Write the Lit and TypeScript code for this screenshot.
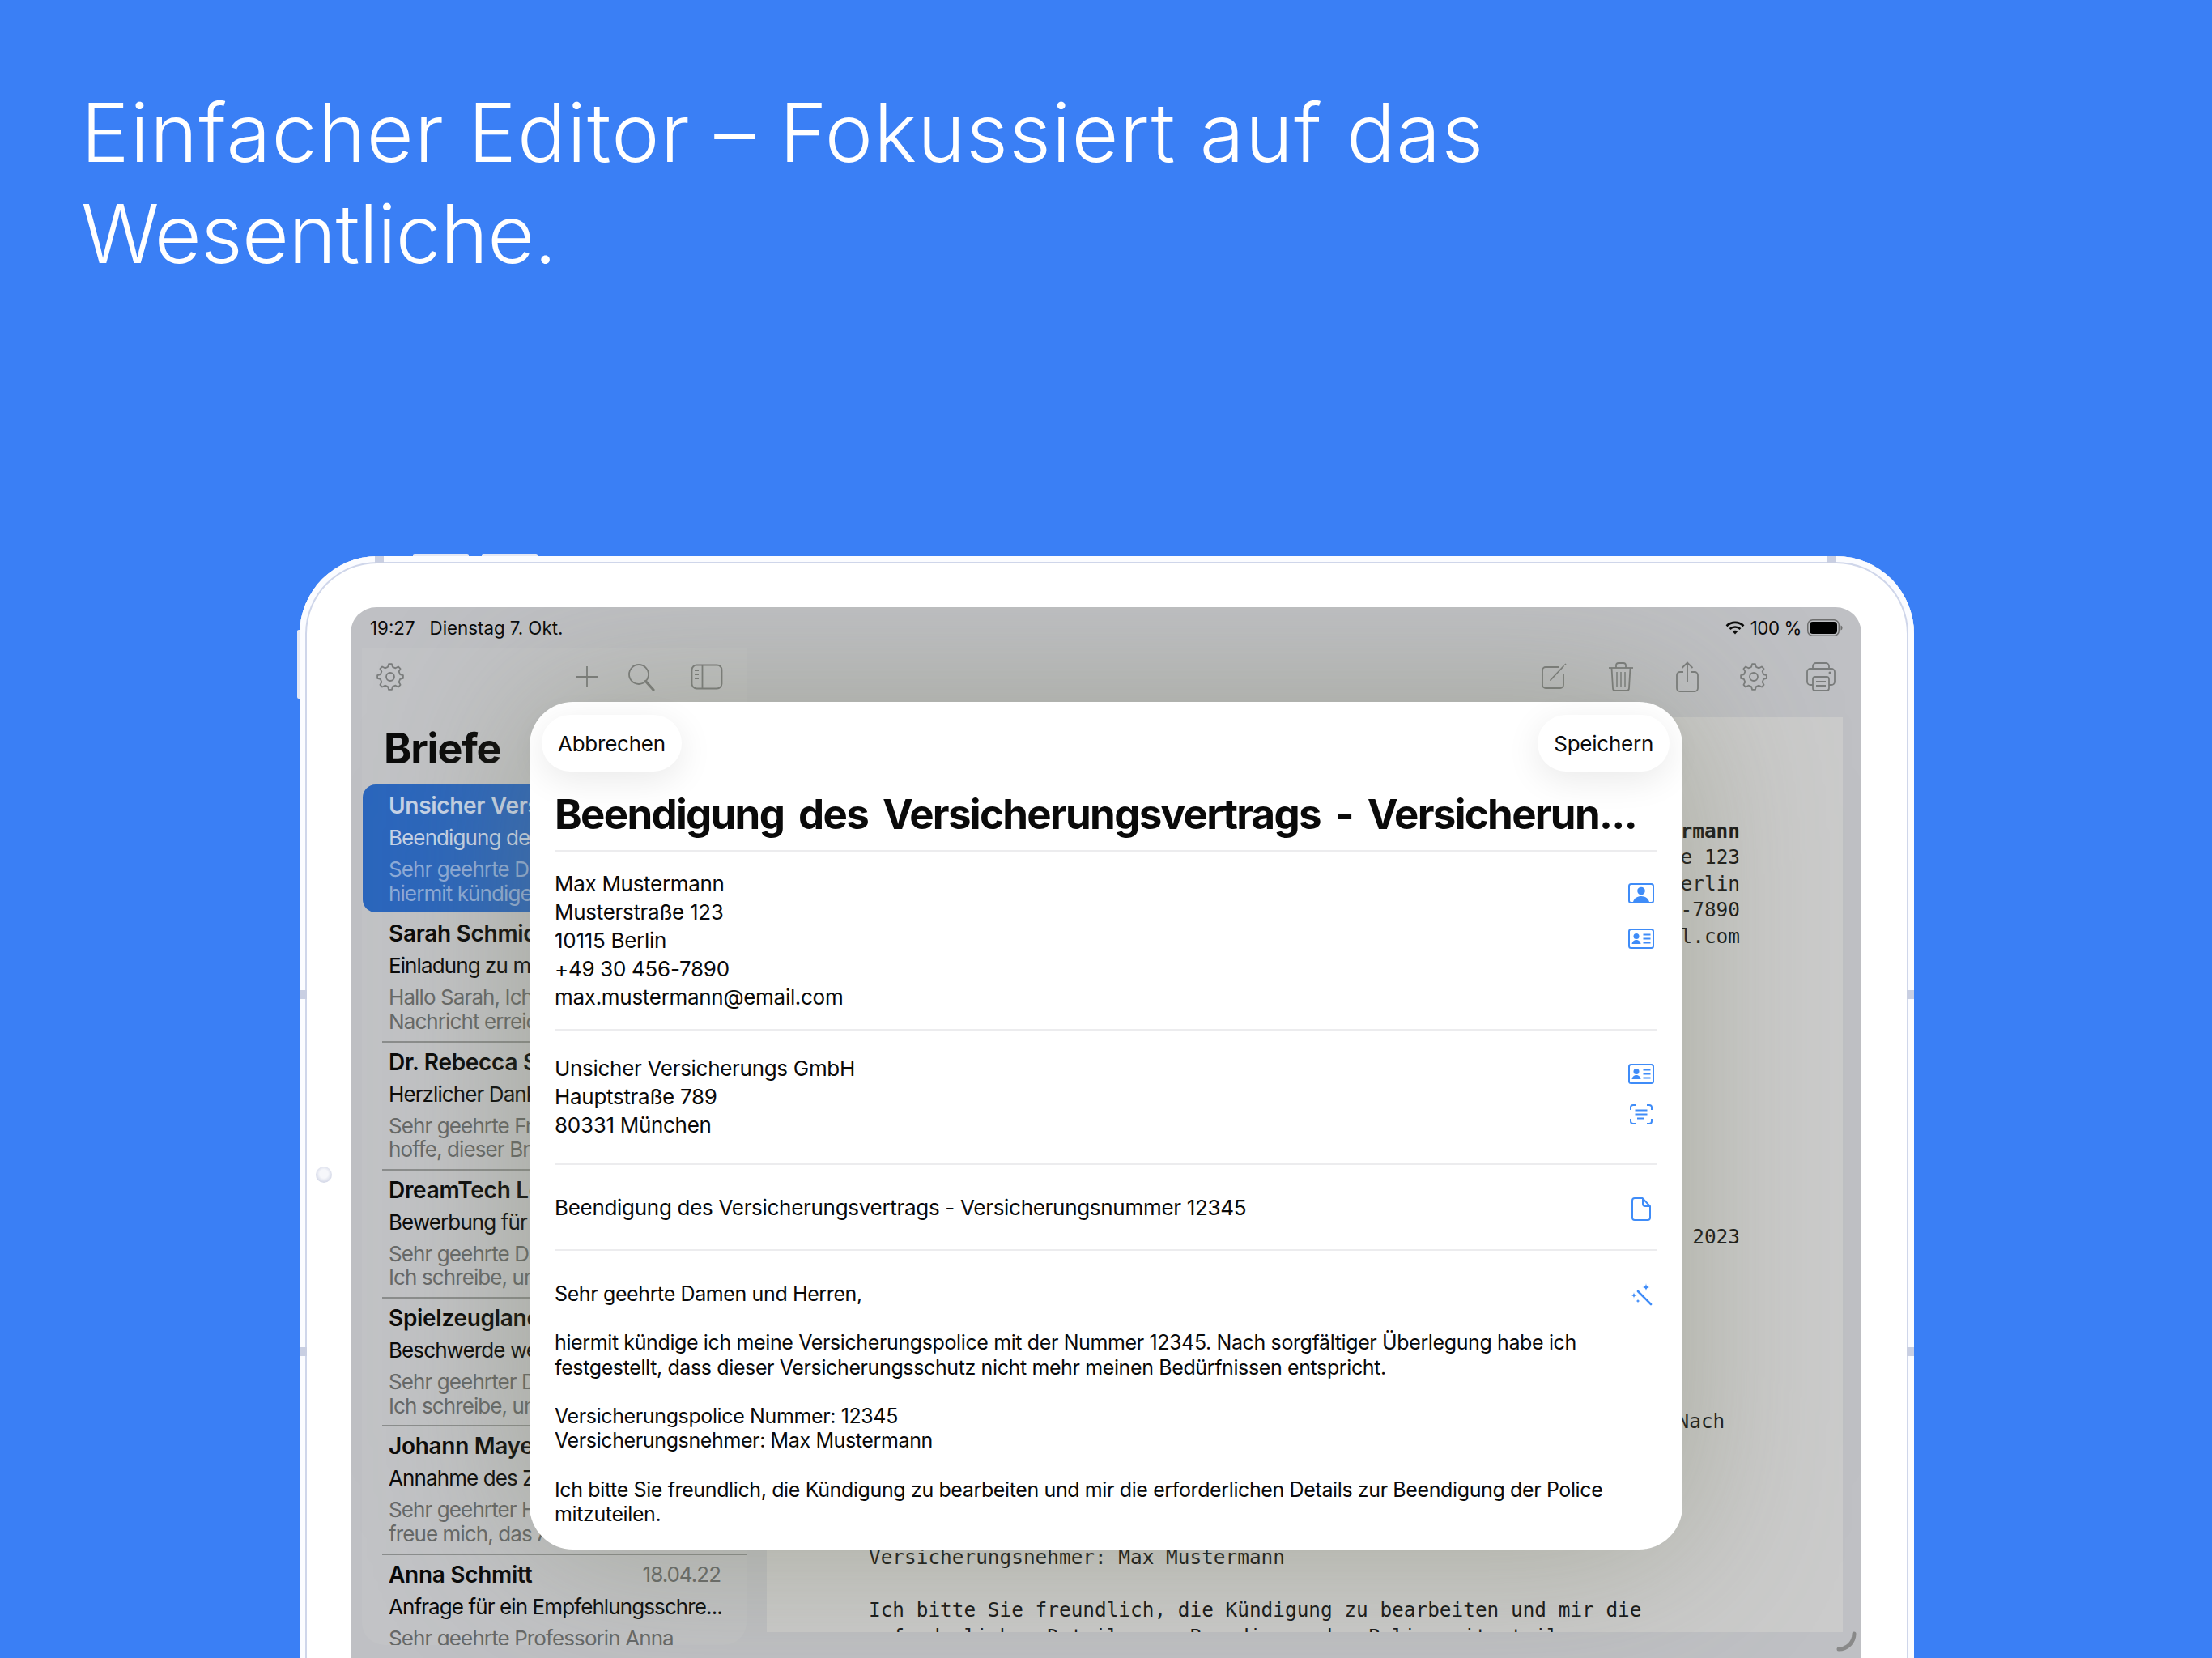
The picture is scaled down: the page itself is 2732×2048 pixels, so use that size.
import { LitElement, html, css } from 'lit';
import { customElement } from 'lit/decorators.js';
import { classMap } from 'lit/directives/class-map.js';

interface Letter {
  name: string;
  subject: string;
  preview: string[];
  date?: string;
  selected?: boolean;
}

const LETTERS: Letter[] = [
  {
    name: 'Unsicher Versicherungs GmbH',
    subject: 'Beendigung des Versicherungsvertrags',
    preview: ['Sehr geehrte Damen und Herren,', 'hiermit kündige ich meine Police'],
    selected: true,
  },
  {
    name: 'Sarah Schmidt',
    subject: 'Einladung zu meiner Feier',
    preview: ['Hallo Sarah,  Ich hoffe, diese', 'Nachricht erreicht dich gut.'],
  },
  {
    name: 'Dr. Rebecca Schneider',
    subject: 'Herzlicher Dank für Ihre Hilfe',
    preview: ['Sehr geehrte Frau Dr. Schneider, ich', 'hoffe, dieser Brief erreicht Sie gut.'],
  },
  {
    name: 'DreamTech Lösungen',
    subject: 'Bewerbung für die Stelle',
    preview: ['Sehr geehrte Damen und Herren,', 'Ich schreibe, um mich zu bewerben.'],
  },
  {
    name: 'Spielzeugland GmbH',
    subject: 'Beschwerde wegen Lieferung',
    preview: ['Sehr geehrter Damen und Herren,', 'Ich schreibe, um mich zu beschweren.'],
  },
  {
    name: 'Johann Mayer',
    subject: 'Annahme des Zimmers',
    preview: ['Sehr geehrter Herr Mayer, ich', 'freue mich, das Angebot anzunehmen.'],
  },
  {
    name: 'Anna Schmitt',
    subject: 'Anfrage für ein Empfehlungsschre...',
    preview: ['Sehr geehrte Professorin Anna'],
    date: '18.04.22',
  },
];

const BODY = `Sehr geehrte Damen und Herren,

hiermit kündige ich meine Versicherungspolice mit der Nummer 12345. Nach sorgfältiger Überlegung habe ich festgestellt, dass dieser Versicherungsschutz nicht mehr meinen Bedürfnissen entspricht.

Versicherungspolice Nummer: 12345
Versicherungsnehmer: Max Mustermann

Ich bitte Sie freundlich, die Kündigung zu bearbeiten und mir die erforderlichen Details zur Beendigung der Police mitzuteilen.`;

// gear outline, used twice in the toolbars
function gearPath(cx: number, cy: number, inner: number, outer: number, teeth: number) {
  const step = (Math.PI * 2) / teeth;
  const pts: string[] = [];
  for (let i = 0; i < teeth; i++) {
    const a = i * step;
    [
      [inner, -0.3],
      [outer, -0.15],
      [outer, 0.15],
      [inner, 0.3],
    ].forEach(([r, o]) => {
      const t = a + o * step;
      pts.push(`${(cx + r * Math.cos(t)).toFixed(2)} ${(cy + r * Math.sin(t)).toFixed(2)}`);
    });
  }
  return `M${pts.join('L')}Z`;
}

function star(x: number, y: number, r: number) {
  return `M${x} ${y - r}Q${x} ${y} ${x + r} ${y}Q${x} ${y} ${x} ${y + r}Q${x} ${y} ${x - r} ${y}Q${x} ${y} ${x} ${y - r}Z`;
}

const gearIcon = html`<svg class="tool" width="34" height="34" viewBox="0 0 34 34">
  <path d=${gearPath(17, 17, 12.5, 16, 8)} stroke-linejoin="round"></path>
  <circle cx="17" cy="17" r="5"></circle>
</svg>`;

const personCrop = html`<svg width="32" height="25" viewBox="0 0 32 25" fill="none">
  <rect x="1" y="1" width="30" height="23" rx="2.5" stroke="#3f8cf8" stroke-width="2"></rect>
  <circle cx="16" cy="9.5" r="4.8" fill="#3f8cf8"></circle>
  <path d="M6 23c1.5-5 5.500-7 10-7s8.500 2 10 7z" fill="#3f8cf8"></path>
</svg>`;

const personText = html`<svg width="32" height="25" viewBox="0 0 32 25" fill="none">
  <rect x="1" y="1" width="30" height="23" rx="2.5" stroke="#3f8cf8" stroke-width="2"></rect>
  <circle cx="10" cy="9.500" r="3.500" fill="#3f8cf8"></circle>
  <path d="M4.500 19c.5-3.500 3-5 5.500-5s5 1.500 5.500 5z" fill="#3f8cf8"></path>
  <path d="M18.500 7.500h9M18.500 12.500h9M18.500 17.500h9" stroke="#3f8cf8" stroke-width="1.800"></path>
</svg>`;

@customElement('app-root')
export class AppRoot extends LitElement {
  static styles = css`
    :host {
      display: block;
      width: 2732px;
      height: 2048px;
      overflow: hidden;
      background: #3a7ff5;
      font-family: Inter, 'Liberation Sans', sans-serif;
      color: #0a0a0a;
    }

    .headline {
      margin: 0;
      padding: 101px 0 0 100px;
      font-size: 100px;
      line-height: 125px;
      font-weight: 300;
      color: #fff;
    }
    .line-a {
      letter-spacing: 1.200px;
    }
    .line-b {
      letter-spacing: -0.700px;
    }

    .device {
      position: relative;
      width: 1994px;
      height: 1500px;
      box-sizing: border-box;
      margin: 336px 0 0 370px;
      padding: 63px 65px 0 63px;
      background: #fff;
      border-radius: 96px 96px 0 0;
      box-shadow: inset 0 0 0 7px #fbfcff, inset 0 0 0 9px #cfd6ea;
    }

    .hw {
      position: absolute;
      background: #e4e8f4;
    }
    .vol-a { left: 140px; top: -3px; width: 69px; height: 3px; border-radius: 2px 2px 0 0; }
    .vol-b { left: 225px; top: -3px; width: 69px; height: 3px; border-radius: 2px 2px 0 0; }
    .power { left: -3px; top: 91px; width: 3px; height: 85px; border-radius: 2px 0 0 2px; }
    .band { background: #c9cfe2; }
    .band-tl { left: 93px; top: 0; width: 11px; height: 9px; }
    .band-tr { left: 1887px; top: 0; width: 11px; height: 9px; }
    .band-l1 { left: 0; top: 536px; width: 9px; height: 11px; }
    .band-l2 { left: 0; top: 977px; width: 9px; height: 11px; }
    .band-r1 { right: 0; top: 536px; width: 9px; height: 11px; }
    .band-r2 { right: 0; top: 977px; width: 9px; height: 11px; }
    .camera {
      left: 20px;
      top: 754px;
      width: 20px;
      height: 20px;
      border-radius: 50%;
      background: radial-gradient(circle at 50% 45%, #f6f7fb 35%, #d5d9e8 70%, #eceef6 100%);
    }

    .screen {
      position: relative;
      height: 1298px;
      overflow: hidden;
      background: #bfc0c4;
      border-radius: 32px 32px 0 0;
    }

    .status {
      display: flex;
      align-items: center;
      height: 50px;
      box-sizing: border-box;
      padding: 0 23px 0 24px;
      font-size: 22.300px;
    }
    .status .date {
      margin-left: 18px;
    }
    .status .right {
      margin-left: auto;
      display: flex;
      align-items: center;
      gap: 7px;
      letter-spacing: -0.4px;
    }

    .panes {
      display: flex;
    }

    .sidebar {
      flex: none;
      width: 475px;
      height: 1232px;
      margin-left: 14px;
      overflow: hidden;
      border-radius: 0 0 28px 28px;
      background: #c2c3c6;
    }

    .toolbar {
      display: flex;
      align-items: center;
      height: 72px;
    }
    .tool {
      display: block;
      fill: none;
      stroke: #7b7d7d;
      stroke-width: 1.800;
    }
    .sidebar .toolbar {
      padding: 0 29px 0 18px;
    }
    .plus { margin-left: auto; }
    .search { margin-left: 37px; }
    .panel-toggle { margin-left: 44px; }

    .title {
      margin: 0;
      height: 97px;
      box-sizing: border-box;
      padding: 21px 0 0 27px;
      font-size: 52px;
      line-height: 63px;
      font-weight: 700;
      letter-spacing: -1.200px;
    }

    .row {
      height: 158.300px;
      box-sizing: border-box;
      padding: 8px 32px 0 32px;
      margin-left: 1px;
      white-space: nowrap;
      overflow: hidden;
    }
    .row + .row {
      position: relative;
    }
    .row + .row::before {
      content: '';
      position: absolute;
      left: 24px;
      right: 0;
      top: 0;
      height: 2px;
      background: #8b8d8d;
    }
    .row.selected + .row::before {
      display: none;
    }
    .row.selected {
      background: #2b66bd;
      border-radius: 16px;
    }
    .row-head {
      display: flex;
      justify-content: space-between;
      font-size: 28px;
      line-height: 36px;
      font-weight: 600;
      letter-spacing: -0.3px;
    }
    .row-date {
      font-size: 26px;
      font-weight: 400;
      letter-spacing: -1px;
      color: #676969;
    }
    .row-subject {
      margin-top: 4px;
      font-size: 26px;
      line-height: 36px;
      letter-spacing: -0.9px;
    }
    .row-preview {
      margin-top: 6px;
      font-size: 26px;
      line-height: 29.600px;
      letter-spacing: -0.9px;
      color: #666868;
    }
    .row.selected .row-head,
    .row.selected .row-subject {
      color: #c6d3e8;
    }
    .row.selected .row-preview {
      color: #8dabd9;
    }

    .main {
      flex: 1;
      min-width: 0;
    }
    .main .toolbar {
      justify-content: flex-end;
      padding-right: 9px;
    }
    .tool-slot {
      display: flex;
      justify-content: center;
      width: 82.400px;
    }

    .paper {
      box-sizing: border-box;
      width: 1329px;
      height: 1130px;
      margin: 14px 0 0 25px;
      padding: 125px 127px 0 126px;
      overflow: hidden;
      background: #cbcbcb;
      font-family: 'DejaVu Sans Mono', 'Liberation Mono', monospace;
      font-size: 24.400px;
      line-height: 32.400px;
      color: #161616;
    }
    .paper p {
      margin: 0;
    }
    .sender {
      text-align: right;
    }
    .sender b {
      font-weight: 700;
    }
    .recipient { margin-top: 65px !important; }
    .letter-date { margin-top: 177px !important; text-align: right; }
    .letter-subject { margin-top: 65px !important; }
    .salute { margin-top: 33px !important; }
    .para-a { margin-top: 33px !important; }
    .para-b { margin-top: 38px !important; }
    .para-c { margin-top: 31.500px !important; line-height: 33px; }

    .resize {
      position: absolute;
      right: 6px;
      bottom: 8px;
    }

    .modal {
      position: absolute;
      left: 221px;
      top: 117px;
      width: 1424px;
      height: 1047px;
      box-sizing: border-box;
      padding: 16px 31px 0;
      background: #fff;
      border-radius: 54px;
      box-shadow: 0 0 200px rgba(120, 125, 90, 0.42);
    }
    .modal-actions {
      display: flex;
      justify-content: space-between;
      margin: 0 -15px 0 -16px;
    }
    .pill {
      display: flex;
      align-items: center;
      height: 70px;
      padding: 0 20px;
      border-radius: 35px;
      background: #fff;
      box-shadow: 0 10px 44px rgba(0, 0, 0, 0.09);
      font-size: 26px;
      letter-spacing: -0.25px;
    }
    .letter-title {
      margin: 23px 0 0;
      height: 76px;
      box-sizing: border-box;
      border-bottom: 2px solid #ececee;
      font-size: 51px;
      line-height: 60px;
      font-weight: 700;
      letter-spacing: -1.700px;
      word-spacing: 7.500px;
      white-space: nowrap;
    }
    .section {
      display: flex;
      justify-content: space-between;
      border-bottom: 2px solid #ececee;
      font-size: 26px;
      line-height: 35px;
      letter-spacing: -0.3px;
    }
    .section:last-child {
      border-bottom: 0;
    }
    .icons {
      flex: none;
      width: 40px;
      display: flex;
      flex-direction: column;
      align-items: center;
    }
    .s-sender { padding: 22px 0 22px; }
    .s-sender .icons { padding-top: 17px; gap: 31px; }
    .s-recipient { padding: 29px 0 30px; }
    .s-recipient .icons { padding-top: 12px; gap: 25px; }
    .s-subject { padding: 35px 0 34px; }
    .s-subject .icons { padding-top: 5px; }
    .s-body { padding: 38px 0 0; font-size: 25px; line-height: 30.200px; letter-spacing: -0.38px; }
    .s-body .icons { padding-top: 0; }
    .body-text {
      white-space: pre-line;
    }
  `;

  render() {
    return html`
      <h1 class="headline"><span class="line-a">Einfacher Editor – Fokussiert auf das</span><br /><span class="line-b">Wesentliche.</span></h1>
      <div class="device">
        <i class="hw vol-a"></i><i class="hw vol-b"></i><i class="hw power"></i>
        <i class="hw band band-tl"></i><i class="hw band band-tr"></i>
        <i class="hw band band-l1"></i><i class="hw band band-l2"></i>
        <i class="hw band band-r1"></i><i class="hw band band-r2"></i>
        <i class="hw camera"></i>
        <div class="screen">
          ${this._renderStatus()}
          <div class="panes">
            ${this._renderSidebar()} ${this._renderDocument()}
          </div>
          <svg class="resize" width="25" height="25" viewBox="0 0 25 25" fill="none">
            <path d="M22 3A19 19 0 0 1 3 22" stroke="#898989" stroke-width="5" stroke-linecap="round"></path>
          </svg>
          ${this._renderModal()}
        </div>
      </div>
    `;
  }

  private _renderStatus() {
    return html`
      <div class="status">
        <span>19:27</span><span class="date">Dienstag 7. Okt.</span>
        <div class="right">
          <svg width="24" height="17" viewBox="0 0 24 17" fill="none" stroke="#0a0a0a" stroke-width="2.600">
            <path d="M1.500 6.200a15 15 0 0 1 21 0"></path>
            <path d="M5.500 10a9.500 9.500 0 0 1 13 0"></path>
            <path d="M12 16.500l-3.200-3.400a4.600 4.600 0 0 1 6.400 0z" fill="#0a0a0a" stroke="none"></path>
          </svg>
          <span>100 %</span>
          <svg width="44" height="21" viewBox="0 0 44 21" fill="none">
            <rect x="0.750" y="0.750" width="38.500" height="19.500" rx="6" stroke="#6e6e6e" stroke-width="1.500"></rect>
            <rect x="3" y="3" width="34" height="15" rx="4" fill="#000"></rect>
            <path d="M41.500 7.500c1.500.5 2 1.500 2 3s-.5 2.500-2 3z" fill="#6e6e6e"></path>
          </svg>
        </div>
      </div>
    `;
  }

  private _renderSidebar() {
    return html`
      <aside class="sidebar">
        <div class="toolbar">
          ${gearIcon}
          <svg class="tool plus" width="26" height="26" viewBox="0 0 26 26">
            <path d="M13 0v26M0 13h26"></path>
          </svg>
          <svg class="tool search" width="34" height="34" viewBox="0 0 34 34">
            <circle cx="14" cy="14" r="12"></circle>
            <path d="M22.500 22.500L32 33" stroke-width="3.200" stroke-linecap="round"></path>
          </svg>
          <svg class="tool panel-toggle" width="40" height="32" viewBox="0 0 40 32" stroke-width="2.400">
            <rect x="1.500" y="1.500" width="37" height="29" rx="6"></rect>
            <path d="M14.500 1.500v29"></path>
            <path d="M5 8h5M5 13h5M5 18h5" stroke-width="2"></path>
          </svg>
        </div>
        <h2 class="title">Briefe</h2>
        ${LETTERS.map(
          (letter) => html`
            <div class=${classMap({ row: true, selected: !!letter.selected })}>
              <div class="row-head">
                <span>${letter.name}</span>
                ${letter.date ? html`<span class="row-date">${letter.date}</span>` : ''}
              </div>
              <div class="row-subject">${letter.subject}</div>
              <div class="row-preview">
                ${letter.preview.map((line) => html`<div>${line}</div>`)}
              </div>
            </div>
          `
        )}
      </aside>
    `;
  }

  private _renderDocument() {
    return html`
      <section class="main">
        <div class="toolbar">
          <div class="tool-slot">
            <svg class="tool" width="34" height="34" viewBox="0 0 34 34" stroke-width="2">
              <path d="M23 5H7a4 4 0 0 0-4 4v18a4 4 0 0 0 4 4h18a4 4 0 0 0 4-4V13"></path>
              <path d="M13 21L29 4" stroke-linecap="round"></path>
              <path d="M30.500 2.500L32 1" stroke-width="1.600"></path>
            </svg>
          </div>
          <div class="tool-slot">
            <svg class="tool" width="32" height="36" viewBox="0 0 32 36" stroke-width="2">
              <path d="M1 7h30"></path>
              <path d="M10 7V4a3 3 0 0 1 3-3h6a3 3 0 0 1 3 3v3"></path>
              <path d="M4.500 7l1.500 25a3 3 0 0 0 3 3h14a3 3 0 0 0 3-3l1.500-25"></path>
              <path d="M11 12v18M16 12v18M21 12v18" stroke-width="1.500"></path>
            </svg>
          </div>
          <div class="tool-slot">
            <svg class="tool" width="28" height="38" viewBox="0 0 28 38" stroke-width="2">
              <path d="M9 13H5a4 4 0 0 0-4 4v16a4 4 0 0 0 4 4h18a4 4 0 0 0 4-4V17a4 4 0 0 0-4-4h-4"></path>
              <path d="M14 25V2M7.500 8L14 1.500 20.500 8"></path>
            </svg>
          </div>
          <div class="tool-slot">${gearIcon}</div>
          <div class="tool-slot">
            <svg class="tool" width="36" height="36" viewBox="0 0 36 36" stroke-width="2">
              <path d="M8 8V5a4 4 0 0 1 4-4h12a4 4 0 0 1 4 4v3"></path>
              <path d="M8 28H5a4 4 0 0 1-4-4V12a4 4 0 0 1 4-4h26a4 4 0 0 1 4 4v12a4 4 0 0 1-4 4h-3"></path>
              <rect x="8" y="18" width="20" height="17" rx="3"></rect>
              <path d="M12 24h12M12 29h12"></path>
              <circle cx="29" cy="13" r="1.500" fill="#7b7d7d" stroke="none"></circle>
            </svg>
          </div>
        </div>
        <article class="paper">
          <p class="sender">
            <b>Max Mustermann</b><br />Musterstraße 123<br />10115 Berlin<br />+49 30 456-7890<br />max.mustermann@email.com
          </p>
          <p class="recipient">Unsicher Versicherungs GmbH<br />Hauptstraße 789<br />80331 München</p>
          <p class="letter-date">7. Oktober 2023</p>
          <p class="letter-subject">Beendigung des Versicherungsvertrags</p>
          <p class="salute">Sehr geehrte Damen und Herren,</p>
          <p class="para-a">
            hiermit kündige ich meine Versicherungspolice mit der Nummer 12345. Nach sorgfältiger Überlegung habe ich festgestellt, dass dieser Versicherungsschutz nicht mehr meinen Bedürfnissen entspricht.
          </p>
          <p class="para-b">Versicherungspolice Nummer: 12345<br />Versicherungsnehmer: Max Mustermann</p>
          <p class="para-c">
            Ich bitte Sie freundlich, die Kündigung zu bearbeiten und mir die erforderlichen Details zur Beendigung der Police mitzuteilen.
          </p>
        </article>
      </section>
    `;
  }

  private _renderModal() {
    return html`
      <div class="modal">
        <div class="modal-actions">
          <div class="pill">Abbrechen</div>
          <div class="pill">Speichern</div>
        </div>
        <h2 class="letter-title">Beendigung des Versicherungsvertrags - Versicherun...</h2>
        <div class="section s-sender">
          <div>Max Mustermann<br />Musterstraße 123<br />10115 Berlin<br />+49 30 456-7890<br />max.mustermann@email.com</div>
          <div class="icons">${personCrop}${personText}</div>
        </div>
        <div class="section s-recipient">
          <div>Unsicher Versicherungs GmbH<br />Hauptstraße 789<br />80331 München</div>
          <div class="icons">
            ${personText}
            <svg width="28" height="25" viewBox="0 0 28 25" fill="none" stroke="#3f8cf8" stroke-width="2">
              <path d="M1 7V4a3 3 0 0 1 3-3h3M21 1h3a3 3 0 0 1 3 3v3M27 18v3a3 3 0 0 1-3 3h-3M7 24H4a3 3 0 0 1-3-3v-3"></path>
              <path d="M6.500 7.500h15M6.500 12.500h15M9 17.500h9"></path>
            </svg>
          </div>
        </div>
        <div class="section s-subject">
          <div>Beendigung des Versicherungsvertrags - Versicherungsnummer 12345</div>
          <div class="icons">
            <svg width="24" height="29" viewBox="0 0 24 29" fill="none" stroke="#3f8cf8" stroke-width="2" stroke-linejoin="round">
              <path d="M4 1h9.500L23 11v14a3 3 0 0 1-3 3H4a3 3 0 0 1-3-3V4a3 3 0 0 1 3-3z"></path>
              <path d="M14 1.500V8a3 3 0 0 0 3 3h5.500"></path>
            </svg>
          </div>
        </div>
        <div class="section s-body">
          <div class="body-text">${BODY}</div>
          <div class="icons">
            <svg width="30" height="30" viewBox="0 0 30 30" fill="#3f8cf8">
              <path d="M11 12L27 28" stroke="#3f8cf8" stroke-width="2.600" stroke-linecap="round"></path>
              <path d=${star(21, 7, 5)}></path>
              <path d=${star(6, 17, 4)}></path>
              <path d=${star(11, 24, 3)}></path>
            </svg>
          </div>
        </div>
      </div>
    `;
  }
}

declare global {
  interface HTMLElementTagNameMap {
    'app-root': AppRoot;
  }
}
